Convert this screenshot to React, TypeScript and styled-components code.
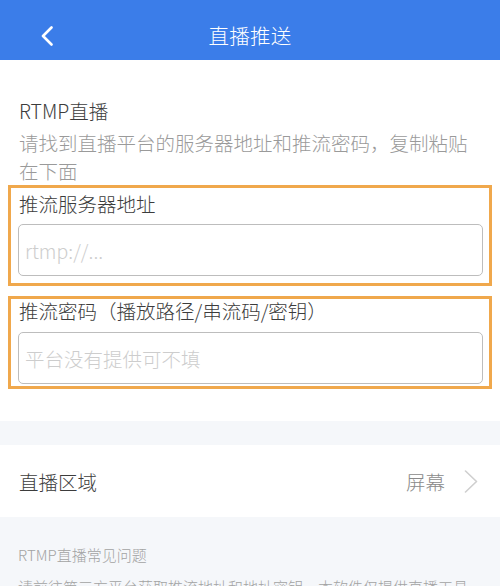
import styled, { createGlobalStyle } from 'styled-components'

const GlobalStyle = createGlobalStyle`
  html, body {
    margin: 0;
    padding: 0;
    background: #ffffff;
  }
  body {
    font-family: "Noto Sans CJK SC", "Noto Sans", sans-serif;
    font-weight: 300;
    color: #3c3c3c;
  }
  * {
    box-sizing: border-box;
  }
`

const Page = styled.div`
  width: 500px;
  height: 586px;
  overflow: hidden;
  display: flex;
  flex-direction: column;
  background: #f5f7fa;
`

const Header = styled.header`
  position: relative;
  height: 60px;
  flex: none;
  display: flex;
  align-items: center;
  justify-content: center;
  padding-top: 10px;
  background: #3b7de9;
  color: #fff;
`

const BackButton = styled.button`
  position: absolute;
  left: 36px;
  top: 24px;
  width: 22px;
  height: 24px;
  padding: 0;
  display: flex;
  align-items: center;
  justify-content: center;
  background: none;
  border: none;
  cursor: pointer;
`

const Title = styled.h1`
  margin: 0;
  font-size: 20.5px;
  font-weight: 300;
  line-height: 26px;
  letter-spacing: 0.3px;
`

const FormSection = styled.section`
  display: flex;
  flex-direction: column;
  padding: 38px 8px 32px;
  background: #fff;
`

const Intro = styled.div`
  display: flex;
  flex-direction: column;
  gap: 5px;
  padding-left: 11px;
`

const IntroTitle = styled.div`
  font-size: 19.5px;
  line-height: 26px;
  color: #3c3c3c;
`

const IntroText = styled.p`
  margin: 0;
  font-size: 19.5px;
  line-height: 28px;
  color: #9a9a9a;
  padding-right: 20px;
`

interface FieldBoxProps {
  $pt: number
  $pb: number
  $lh: number
  $gap: number
}

const FieldBox = styled.div<FieldBoxProps>`
  display: flex;
  flex-direction: column;
  gap: ${({ $gap }: FieldBoxProps) => $gap}px;
  padding: ${({ $pt, $pb }: FieldBoxProps) => `${$pt}px 6px ${$pb}px 7px`};
  border: 3px solid #f0a84c;
  line-height: ${({ $lh }: FieldBoxProps) => $lh}px;

  & + & {
    margin-top: 10px;
  }
`

const FieldLabel = styled.label`
  padding-left: 1px;
  font-size: 19.5px;
  color: #3c3c3c;
`

const TextInput = styled.input`
  height: 52px;
  width: 100%;
  padding: 0 6px;
  font-family: "Noto Sans CJK SC", "Noto Sans", sans-serif;
  font-weight: 300;
  font-size: 19.5px;
  color: #333;
  background: #fff;
  border: 1.5px solid #bdbdbd;
  border-radius: 5px;
  outline: none;

  &::placeholder {
    color: #cdcdcd;
  }
`

const Spacer = styled.div`
  height: 24px;
  flex: none;
  background: #f5f7fa;
`

const Row = styled.div`
  height: 72px;
  flex: none;
  display: flex;
  align-items: center;
  padding: 0 22px 0 19px;
  background: #fff;
`

const RowLabel = styled.span`
  flex: 1;
  font-size: 19.5px;
  color: #3c3c3c;
`

const RowValue = styled.span`
  display: flex;
  align-items: center;
  gap: 19px;
  font-size: 19.5px;
  color: #8a8a8a;
`

const Help = styled.section`
  flex: 1;
  padding: 24px 18px 0;
  background: #f5f7fa;
  color: #a3a3a3;
`

const HelpTitle = styled.div`
  font-size: 15px;
  line-height: 28px;
`

const HelpText = styled.p`
  margin: 4px 0 0;
  font-size: 15px;
  line-height: 28px;
`

export default function App() {
  return (
    <>
      <GlobalStyle />
      <Page>
        <Header>
          <BackButton type="button" aria-label="返回">
            <svg width="14" height="20" viewBox="0 0 14 20" fill="none">
              <path d="M11.5 1.5 L3 10 L11.5 18.5" stroke="#fff" strokeWidth="2.6" strokeLinecap="round" strokeLinejoin="round" />
            </svg>
          </BackButton>
          <Title>直播推送</Title>
        </Header>

        <FormSection>
          <Intro>
            <IntroTitle>RTMP直播</IntroTitle>
            <IntroText>请找到直播平台的服务器地址和推流密码，复制粘贴在下面</IntroText>
          </Intro>

          <FieldBox $pt={3} $pb={7} $lh={26} $gap={7}>
            <FieldLabel>推流服务器地址</FieldLabel>
            <TextInput placeholder="rtmp://..." />
          </FieldBox>

          <FieldBox $pt={0} $pb={2} $lh={24} $gap={9}>
            <FieldLabel>推流密码（播放路径/串流码/密钥）</FieldLabel>
            <TextInput placeholder="平台没有提供可不填" />
          </FieldBox>
        </FormSection>

        <Spacer />

        <Row>
          <RowLabel>直播区域</RowLabel>
          <RowValue>
            屏幕
            <svg width="14" height="23" viewBox="0 0 14 23" fill="none">
              <path d="M1.5 1 L12.5 11.5 L1.5 22" stroke="#cfcfcf" strokeWidth="1.6" strokeLinecap="round" strokeLinejoin="round" />
            </svg>
          </RowValue>
        </Row>

        <Help>
          <HelpTitle>RTMP直播常见问题</HelpTitle>
          <HelpText>请前往第三方平台获取推流地址和地址密钥，本软件仅提供直播工具</HelpText>
        </Help>
      </Page>
    </>
  )
}
